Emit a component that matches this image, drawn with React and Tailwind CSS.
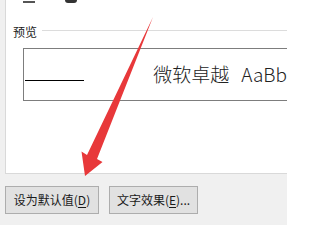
import React from "react";

const cjk = { fontFamily: '"Noto Sans CJK SC", "Noto Sans", sans-serif' };

const Arrow = () => (
  <svg className="absolute inset-0 pointer-events-none" width="287" height="225" viewBox="0 0 287 225">
    <polygon points="153,17 97,159 102.5,162 85,176 81.5,151.5 87,155" fill="#e8383a" />
  </svg>
);

const App = () => {
  return (
    <div className="relative w-[287px] h-[225px] overflow-hidden bg-[#f0f0f0] text-[#1a1a1a]" style={cjk}>
      {/* font tab panel */}
      <div className="ml-[5px] h-[174px] bg-white border-l border-b border-[#d9d9d9]">
        {/* bottoms of the row above */}
        <div className="flex h-[5px]">
          <div className="ml-[17px] mt-[1px] w-[12px] h-[2px] bg-[#555]" />
          <div className="ml-[30px] w-[12px] h-[3px] bg-[#333] rounded-b-sm" />
        </div>

        {/* group: preview */}
        <div className="flex mt-[20px] h-[14px]">
          <span className="ml-[7px] text-[12px] leading-[14px]">预览</span>
          <div className="flex-1 h-px mt-[5px] ml-[5px] bg-[#dcdcdc]" />
        </div>

        <div className="flex items-start ml-[17px] mt-[9px] h-[53px] border border-r-0 border-[#7d7d7d]">
          <div className="ml-[1px] mt-[31px] w-[63px] h-px bg-black" />
          <span className="ml-[69px] mt-[15px] text-[19px] leading-[19px] font-light text-[#222] whitespace-nowrap">
            微软卓越<span className="ml-[12px]">AaBb</span>
          </span>
        </div>
      </div>

      {/* buttons */}
      <div className="flex gap-[10px] pl-[5px] mt-[12px]">
        <button className="w-[94px] h-[28px] border border-[#adadad] bg-[#e1e1e1] text-[12px] leading-[14px] whitespace-nowrap">
          设为默认值(<u className="underline-offset-2">D</u>)
        </button>
        <button className="w-[89px] h-[28px] border border-[#adadad] bg-[#e1e1e1] text-[12px] leading-[14px] whitespace-nowrap">
          文字效果(<u className="underline-offset-2">E</u>)...
        </button>
      </div>

      <Arrow />
    </div>
  );
};

export default App;
